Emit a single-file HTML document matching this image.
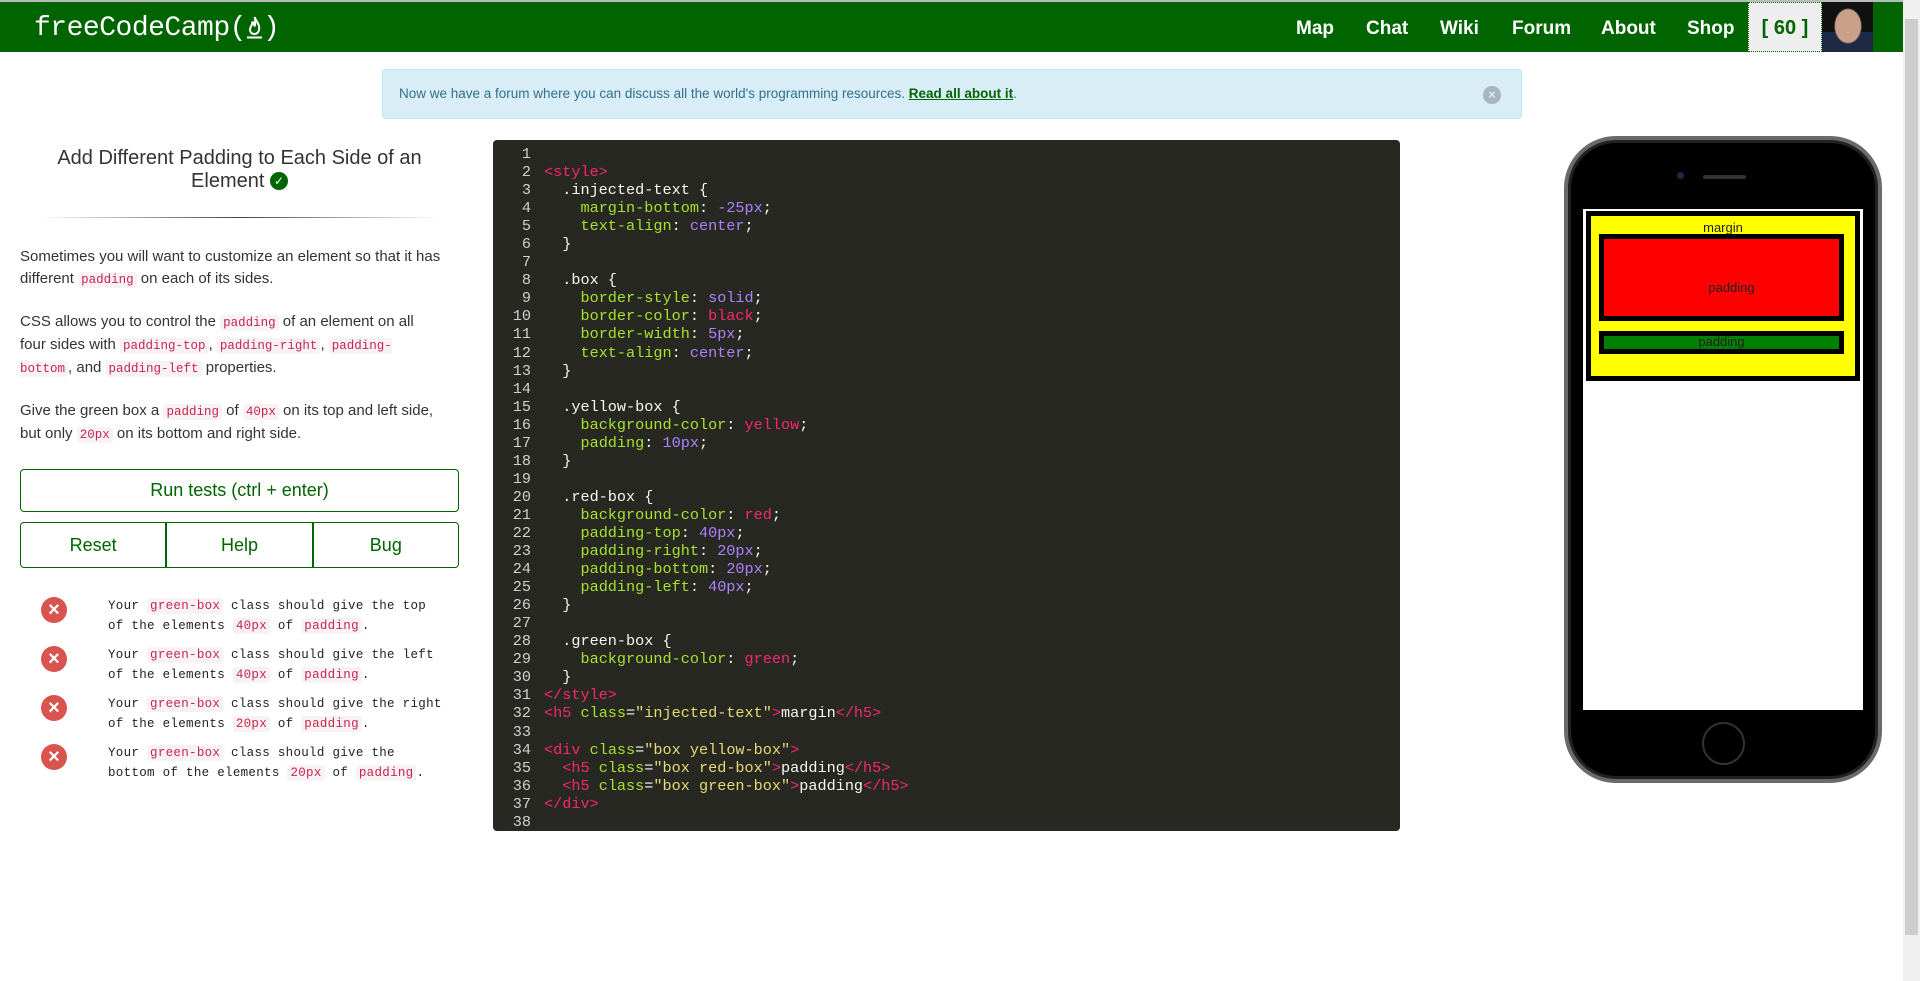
<!DOCTYPE html>
<html><head><meta charset="utf-8"><style>
*{box-sizing:border-box;margin:0;padding:0}
body{width:1920px;height:981px;overflow:hidden;background:#fff;font-family:"Liberation Sans",sans-serif;position:relative;color:#333}
.abs{position:absolute}
#top{left:0;top:0;width:1903px;height:2px;background:#bbb}
#nav{left:0;top:2px;width:1903px;height:50px;background:#006400}
#logo{left:34px;top:12px;font-family:"Liberation Mono",monospace;font-size:28px;line-height:34px;color:#fff;letter-spacing:-0.5px;white-space:nowrap}
.ni{top:18px;color:#fff;font-weight:bold;font-size:19px}
#pts{left:1748px;top:2px;width:74px;height:50px;background:#eee;border:1px dotted #006400;color:#006400;font-size:20px;font-weight:bold;text-align:center;line-height:50px}
#av{left:1822px;top:2px;width:51px;height:50px;background:radial-gradient(ellipse 14px 18px at 26px 24px,#c9a08a 90%,transparent 100%),linear-gradient(#111 0 60%,#1e2a44 60%)}
#sb{left:1903px;top:0;width:17px;height:981px;background:#f0f0f0}
#sbt{left:1905px;top:19px;width:13px;height:916px;background:#cdcdcd}
#alert{left:382px;top:69px;width:1140px;height:50px;background:#d9edf7;border:1px solid #bce8f1;border-radius:3px;color:#31708f;font-size:13.5px;padding:16px 0 0 16px}
#alert a{color:#006400;font-weight:bold;text-decoration:underline}
#close{left:1483px;top:86px;width:18px;height:18px;border-radius:50%;background:#aab4bd;color:#d9edf7;font-size:13px;text-align:center;line-height:18px;font-weight:bold}
#title{left:20px;top:147px;width:439px;text-align:center;font-size:20px;line-height:23px;color:#333}
#hr{left:40px;top:217px;width:400px;height:1px;background:linear-gradient(90deg,#fff,#444,#fff)}
.p{left:20px;width:412px;font-size:15px;line-height:22px;color:#333}
code{font-family:"Liberation Mono",monospace;font-size:12.5px;color:#c7254e;background:#f9f2f4;padding:1px 3px;border-radius:3px}
.btn{border:1px solid #006400;border-radius:4px;color:#006400;text-align:center;font-size:18px}
#run{left:20px;top:469px;width:439px;height:43px;line-height:41px}
#row{left:20px;top:522px;width:439px;height:46px;display:flex}
#row div{flex:1;line-height:44px;font-size:18px;color:#006400;text-align:center}
#row div+div{border-left:2px solid #006400}
.x{left:41px;width:26px;height:26px;border-radius:50%;background:#d9534f;color:#fff;font-size:20px;font-weight:bold;text-align:center;line-height:26px}
.t{left:108px;width:338px;font-family:"Liberation Mono",monospace;font-size:12.5px;line-height:20px;color:#222;letter-spacing:.3px}
.t code{font-size:12.5px;color:#c7254e}
#ed{left:493px;top:140px;width:907px;height:691px;background:#272822;border-radius:4px}
#code{left:493px;top:145px;font-family:"Liberation Mono",monospace;font-size:15.2px;line-height:18.05px;color:#f8f8f2;white-space:pre}
.ln{display:inline-block;width:38px;text-align:right;color:#d0d0d0;margin-right:13px}
.tg{color:#f92672}.pr{color:#a6e22e}.nu{color:#ae81ff}.kw{color:#f92672}.st{color:#e6db74}
#phone{left:1564px;top:136px;width:318px;height:647px;border-radius:52px;background:#000;border:4px solid #6a6a6a;box-shadow:inset 0 0 0 3px #222}
#screen{left:1583px;top:209px;width:280px;height:501px;background:#fff}
#cam{left:1677px;top:172px;width:7px;height:7px;border-radius:50%;background:#1a2a4a}
#spk{left:1703px;top:175px;width:43px;height:4px;border-radius:2px;background:#333}
#home{left:1702px;top:722px;width:43px;height:43px;border-radius:50%;border:2px solid #333}
#yb{left:1586px;top:211px;width:274px;height:170px;background:#ff0;border:5px solid #000}
#rb{left:1599px;top:234px;width:245px;height:87px;background:red;border:5px solid #000}
#gb{left:1599px;top:331px;width:245px;height:23px;background:green;border:5px solid #000}
.pt{font-size:13px;color:#222;text-align:center}
</style></head><body>
<div class="abs" id="top"></div>
<div class="abs" id="nav"></div>
<div class="abs" id="logo">freeCodeCamp(<svg width="17" height="28" viewBox="0 0 17 28" style="vertical-align:-5px"><path d="M8.5 5C10.5 10 14 12 13 18C12.5 20.5 10.5 22 8.5 22C5.5 22 4 20 4 17.5C4 14.5 6.5 13.5 6.5 9.5C7.5 11.5 8.5 12.5 8.5 14.5C9.5 11.5 9.5 8 8.5 5Z" fill="none" stroke="#fff" stroke-width="2"/><line x1="1" y1="25.5" x2="16" y2="25.5" stroke="#fff" stroke-width="2"/></svg>)</div>
<div class="abs ni" style="left:1296px">Map</div>
<div class="abs ni" style="left:1366px">Chat</div>
<div class="abs ni" style="left:1440px">Wiki</div>
<div class="abs ni" style="left:1512px">Forum</div>
<div class="abs ni" style="left:1601px">About</div>
<div class="abs ni" style="left:1687px">Shop</div>
<div class="abs" id="pts">[ 60 ]</div>
<div class="abs" id="av"></div>
<div class="abs" id="sb"></div><div class="abs" id="sbt"></div>

<div class="abs" id="alert">Now we have a forum where you can discuss all the world's programming resources. <a>Read all about it</a>.</div>
<div class="abs" id="close">×</div>

<div class="abs" id="title">Add Different Padding to Each Side of an<br>Element <span style="display:inline-block;width:18px;height:18px;border-radius:50%;background:#006400;color:#fff;font-size:12px;line-height:18px;vertical-align:2px">✓</span></div>
<div class="abs" id="hr"></div>
<div class="abs p" style="top:246px;width:440px">Sometimes you will want to customize an element so that it has different <code>padding</code> on each of its sides.</div>
<div class="abs p" style="top:311px">CSS allows you to control the <code>padding</code> of an element on all four sides with <code>padding-top</code>, <code>padding-right</code>, <code>padding-bottom</code>, and <code>padding-left</code> properties.</div>
<div class="abs p" style="top:400px;width:430px">Give the green box a <code>padding</code> of <code>40px</code> on its top and left side, but only <code>20px</code> on its bottom and right side.</div>
<div class="abs btn" id="run">Run tests (ctrl + enter)</div>
<div class="abs btn" id="row"><div>Reset</div><div>Help</div><div>Bug</div></div>

<div class="abs x" style="top:597px">×</div>
<div class="abs t" style="top:596px">Your <code>green-box</code> class should give the top of the elements <code>40px</code> of <code>padding</code>.</div>
<div class="abs x" style="top:646px">×</div>
<div class="abs t" style="top:645px">Your <code>green-box</code> class should give the left of the elements <code>40px</code> of <code>padding</code>.</div>
<div class="abs x" style="top:695px">×</div>
<div class="abs t" style="top:694px">Your <code>green-box</code> class should give the right of the elements <code>20px</code> of <code>padding</code>.</div>
<div class="abs x" style="top:744px">×</div>
<div class="abs t" style="top:743px;width:320px">Your <code>green-box</code> class should give the bottom of the elements <code>20px</code> of <code>padding</code>.</div>

<div class="abs" id="ed"></div>
<div class="abs" id="code"><span class="ln">1</span>
<span class="ln">2</span><span class="tg">&lt;style&gt;</span>
<span class="ln">3</span>  .injected-text {
<span class="ln">4</span>    <span class="pr">margin-bottom</span>: <span class="nu">-25px</span>;
<span class="ln">5</span>    <span class="pr">text-align</span>: <span class="nu">center</span>;
<span class="ln">6</span>  }
<span class="ln">7</span>
<span class="ln">8</span>  .box {
<span class="ln">9</span>    <span class="pr">border-style</span>: <span class="nu">solid</span>;
<span class="ln">10</span>    <span class="pr">border-color</span>: <span class="kw">black</span>;
<span class="ln">11</span>    <span class="pr">border-width</span>: <span class="nu">5px</span>;
<span class="ln">12</span>    <span class="pr">text-align</span>: <span class="nu">center</span>;
<span class="ln">13</span>  }
<span class="ln">14</span>
<span class="ln">15</span>  .yellow-box {
<span class="ln">16</span>    <span class="pr">background-color</span>: <span class="kw">yellow</span>;
<span class="ln">17</span>    <span class="pr">padding</span>: <span class="nu">10px</span>;
<span class="ln">18</span>  }
<span class="ln">19</span>
<span class="ln">20</span>  .red-box {
<span class="ln">21</span>    <span class="pr">background-color</span>: <span class="kw">red</span>;
<span class="ln">22</span>    <span class="pr">padding-top</span>: <span class="nu">40px</span>;
<span class="ln">23</span>    <span class="pr">padding-right</span>: <span class="nu">20px</span>;
<span class="ln">24</span>    <span class="pr">padding-bottom</span>: <span class="nu">20px</span>;
<span class="ln">25</span>    <span class="pr">padding-left</span>: <span class="nu">40px</span>;
<span class="ln">26</span>  }
<span class="ln">27</span>
<span class="ln">28</span>  .green-box {
<span class="ln">29</span>    <span class="pr">background-color</span>: <span class="kw">green</span>;
<span class="ln">30</span>  }
<span class="ln">31</span><span class="tg">&lt;/style&gt;</span>
<span class="ln">32</span><span class="tg">&lt;h5</span> <span class="pr">class</span>=<span class="st">"injected-text"</span><span class="tg">&gt;</span>margin<span class="tg">&lt;/h5&gt;</span>
<span class="ln">33</span>
<span class="ln">34</span><span class="tg">&lt;div</span> <span class="pr">class</span>=<span class="st">"box yellow-box"</span><span class="tg">&gt;</span>
<span class="ln">35</span>  <span class="tg">&lt;h5</span> <span class="pr">class</span>=<span class="st">"box red-box"</span><span class="tg">&gt;</span>padding<span class="tg">&lt;/h5&gt;</span>
<span class="ln">36</span>  <span class="tg">&lt;h5</span> <span class="pr">class</span>=<span class="st">"box green-box"</span><span class="tg">&gt;</span>padding<span class="tg">&lt;/h5&gt;</span>
<span class="ln">37</span><span class="tg">&lt;/div&gt;</span>
<span class="ln">38</span></div>

<div class="abs" id="phone"></div>
<div class="abs" id="screen"></div>
<div class="abs" id="cam"></div><div class="abs" id="spk"></div>
<div class="abs" id="home"></div>
<div class="abs" id="yb"></div>
<div class="abs" id="rb"></div>
<div class="abs" id="gb"></div>
<div class="abs pt" style="left:1591px;top:220px;width:264px">margin</div>
<div class="abs pt" style="left:1624px;top:280px;width:215px">padding</div>
<div class="abs pt" style="left:1604px;top:334px;width:235px">padding</div>
</body></html>
